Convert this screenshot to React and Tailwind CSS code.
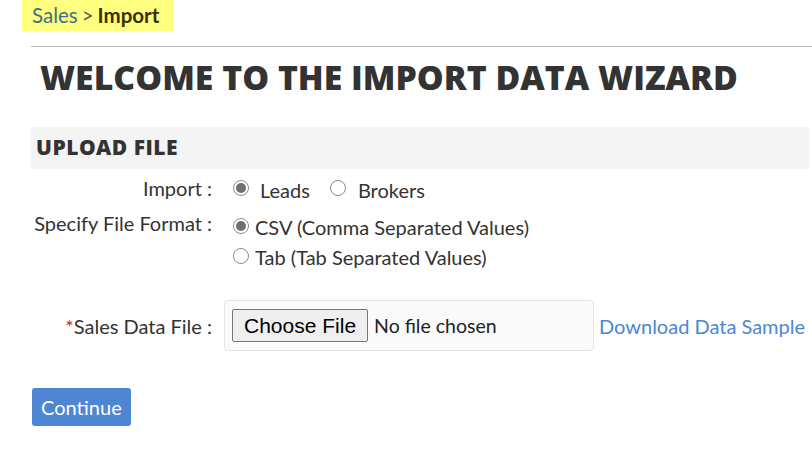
function Radio({ checked }) {
  return (
    <span className="inline-flex h-[16px] w-[16px] shrink-0 items-center justify-center rounded-full border border-[#8a8a8a] bg-white">
      {checked && <span className="h-[10px] w-[10px] rounded-full bg-[#6f6f6f]" />}
    </span>
  );
}

export default function App() {
  return (
    <div className="min-h-[454px] w-[812px] bg-white text-[20px] text-[#333]" style={{ fontFamily: "Lato, 'Open Sans', sans-serif" }}>
      <div className="ml-[22px] inline-flex h-[31px] items-center bg-[#ffff80] pl-[10px] pr-[14px] text-[20.5px]">
        <span className="text-[#3f6f86]">Sales</span>
        <span className="mx-[4px] text-[#555]">&gt;</span>
        <span className="font-bold text-[#3a3000]">Import</span>
      </div>

      <div className="ml-[31px]">
        <div className="mt-[15px] border-t border-[#bbb]" />

        <h1
          className="mt-[8px] pl-[9px] text-[33.8px] font-extrabold leading-[44px] text-[#333]"
          style={{ fontFamily: "'Open Sans', sans-serif" }}
        >
          WELCOME TO THE IMPORT DATA WIZARD
        </h1>

        <div
          className="mt-[28px] mr-[3px] flex h-[42px] items-center bg-[#f4f4f4] pl-[5px] text-[21px] font-extrabold tracking-[0.5px] text-[#333]"
          style={{ fontFamily: "'Open Sans', sans-serif" }}
        >
          UPLOAD FILE
        </div>

        <div className="mt-[4px] flex h-[30px] items-center">
          <div className="w-[182px] pr-[1px] text-right">Import :</div>
          <div className="ml-[20px] flex items-center">
            <Radio checked />
            <span className="ml-[11px] mt-[4px]">Leads</span>
            <span className="ml-[20px]"><Radio /></span>
            <span className="ml-[12px] mt-[4px]">Brokers</span>
          </div>
        </div>

        <div className="mt-[8px] flex">
          <div className="-mt-[3px] w-[182px] pr-[1px] text-right leading-[30px]">Specify File Format :</div>
          <div className="ml-[20px] flex flex-col">
            <div className="flex h-[30px] items-center gap-[6px]">
              <Radio checked />
              <span className="mt-[2px]">CSV (Comma Separated Values)</span>
            </div>
            <div className="flex h-[30px] items-center gap-[6px]">
              <Radio />
              <span className="mt-[2px]">Tab (Tab Separated Values)</span>
            </div>
          </div>
        </div>

        <div className="mt-[29px] flex items-center">
          <div className="w-[182px] pr-[1px] text-right">
            <span className="text-[#d02020]">*</span>Sales Data File :
          </div>
          <div className="ml-[11px] flex h-[51px] w-[370px] items-center rounded-[4px] border border-[#e3e3e3] bg-[#fafafa] pl-[7px]">
            <button
              className="h-[33px] rounded-[2px] border border-[#767676] bg-[#efefef] px-[11px] text-[21px] leading-none text-black"
              style={{ fontFamily: "'Liberation Sans', Arial, sans-serif" }}
            >
              Choose File
            </button>
            <span className="ml-[6px] text-[19.5px] text-[#222]">No file chosen</span>
          </div>
          <a className="ml-[5px] text-[20px] text-[#4a86d8]">Download Data Sample</a>
        </div>

        <button className="ml-[1px] mt-[37px] h-[38px] rounded-[3px] bg-[#4f86d4] px-[9px] text-[20px] text-white">
          Continue
        </button>
      </div>
    </div>
  );
}
